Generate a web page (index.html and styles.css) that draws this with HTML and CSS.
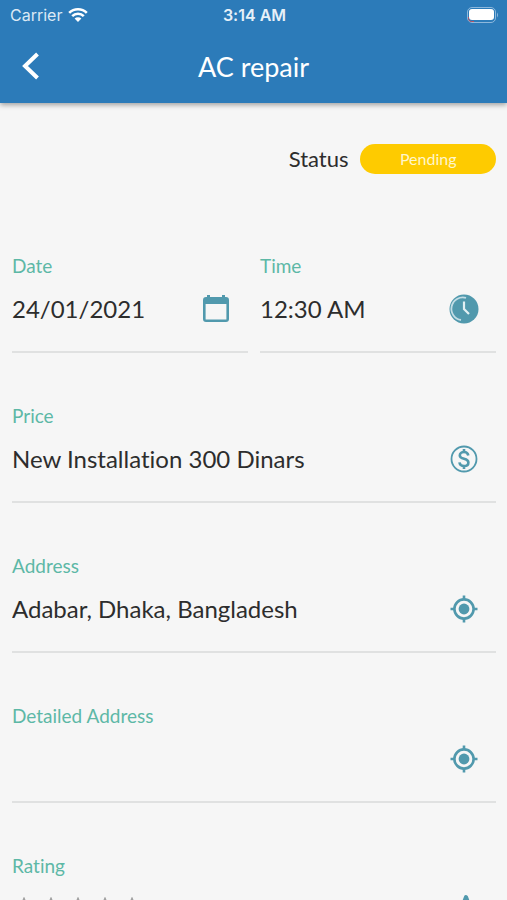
FILE: index.html
```html
<!DOCTYPE html>
<html lang="en">
	<head>
		<meta charset="UTF-8" />
		<meta name="viewport" content="width=device-width, initial-scale=1.0" />
		<title>AC repair</title>
		<link rel="stylesheet" href="styles.css">
	</head>
	<body>

		<header>
			<div class="status-bar">
				<div class="carrier">
					<span>Carrier</span>
					<svg width="20" height="16" viewBox="0 0 20 16" aria-hidden="true">
						<path d="M1.2 5.9a12.4 12.4 0 0 1 17.6 0M4.2 9.1a8.2 8.2 0 0 1 11.6 0" fill="none" stroke="#fff" stroke-width="2.6" />
						<path d="M6.6 11.6a4.8 4.8 0 0 1 6.8 0L10 15z" fill="#fff" />
					</svg>
				</div>
				<time class="clock">3:14 AM</time>
				<div class="battery">
					<svg width="32" height="16" viewBox="0 0 32 16" aria-hidden="true">
						<rect x="0.5" y="0.5" width="28" height="15" rx="4.5" fill="none" stroke="#8db8dc" />
						<path d="M1.5 10v1.5a3 3 0 0 0 3 3H7" fill="none" stroke="#b8505f" />
						<rect x="2" y="2" width="25" height="11" rx="3" fill="#fff" />
						<path d="M30 5.5q2 2.5 0 5z" fill="#8db8dc" />
					</svg>
				</div>
			</div>
			<div class="nav-bar">
				<button class="back" type="button" aria-label="Back">
					<svg width="18" height="28" viewBox="0 0 18 28" aria-hidden="true">
						<path d="M15.5 2 3 14l12.5 12" fill="none" stroke="#fff" stroke-width="4" />
					</svg>
				</button>
				<h1>AC repair</h1>
			</div>
		</header>

		<main>
			<div class="status-row">
				<span>Status</span>
				<span class="badge">Pending</span>
			</div>

			<form>
				<div class="row">
					<div class="field">
						<label for="date">Date</label>
						<div class="control">
							<input id="date" type="text" value="24/01/2021">
							<svg class="icon" viewBox="0 0 30 30" aria-hidden="true">
								<path d="M7.5 1v4M22.5 1v4" stroke="#5199ad" stroke-width="3" />
								<path d="M5 3h20a3 3 0 0 1 3 3v19a3 3 0 0 1-3 3H5a3 3 0 0 1-3-3V6a3 3 0 0 1 3-3zM4.600 10v15.500h20.800V10z" fill="#5199ad" fill-rule="evenodd" />
							</svg>
						</div>
					</div>
					<div class="field">
						<label for="time">Time</label>
						<div class="control">
							<input id="time" type="text" value="12:30 AM">
							<svg class="icon" viewBox="0 0 30 30" aria-hidden="true">
								<circle cx="15" cy="15" r="14.500" fill="#5199ad" />
								<path d="M17 3.800A11.400 11.400 0 1 0 12 26" fill="none" stroke="#c3dde5" stroke-width="1.800" />
								<path d="M15 7.500V15l5 5" fill="none" stroke="#e2f0f3" stroke-width="2.200" />
							</svg>
						</div>
					</div>
				</div>

				<div class="field">
					<label for="price">Price</label>
					<div class="control">
						<input id="price" type="text" value="New Installation 300 Dinars">
						<svg class="icon" viewBox="0 0 30 30" aria-hidden="true">
							<circle cx="15" cy="15" r="12.500" fill="none" stroke="#5199ad" stroke-width="1.800" />
							<path d="M15 5v3M15 22v3M19.300 11.500c-.4-2.300-1.900-3.500-4.300-3.500s-4.200 1.300-4.200 3.400c0 4.600 8.600 2.200 8.600 7 0 2.300-1.800 3.600-4.400 3.600s-4.200-1.300-4.600-3.600" fill="none" stroke="#5199ad" stroke-width="2.600" />
						</svg>
					</div>
				</div>

				<div class="field">
					<label for="address">Address</label>
					<div class="control">
						<input id="address" type="text" value="Adabar, Dhaka, Bangladesh">
						<svg class="icon" viewBox="0 0 30 30" aria-hidden="true">
							<circle cx="15" cy="15" r="9.600" fill="none" stroke="#5199ad" stroke-width="2.600" />
							<circle cx="15" cy="15" r="5.400" fill="#5199ad" />
							<path d="M15 1.500v4M15 24.500v4M1.500 15h4M24.500 15h4" stroke="#5199ad" stroke-width="2.600" />
						</svg>
					</div>
				</div>

				<div class="field">
					<label for="detailed">Detailed Address</label>
					<div class="control">
						<input id="detailed" type="text" value="">
						<svg class="icon" viewBox="0 0 30 30" aria-hidden="true">
							<circle cx="15" cy="15" r="9.600" fill="none" stroke="#5199ad" stroke-width="2.600" />
							<circle cx="15" cy="15" r="5.400" fill="#5199ad" />
							<path d="M15 1.500v4M15 24.500v4M1.500 15h4M24.500 15h4" stroke="#5199ad" stroke-width="2.600" />
						</svg>
					</div>
				</div>

				<div class="field">
					<span class="label" id="ratingLabel">Rating</span>
					<div class="control">
						<div class="stars" role="group" aria-labelledby="ratingLabel">
							<button type="button" aria-label="1 star"><svg viewBox="0 0 24 24"><path d="M12 2l3 7 7.500.6-5.700 5 1.700 7.400-6.500-4-6.500 4 1.700-7.400-5.700-5L9 9z" /></svg></button>
							<button type="button" aria-label="2 stars"><svg viewBox="0 0 24 24"><path d="M12 2l3 7 7.500.6-5.700 5 1.700 7.400-6.500-4-6.500 4 1.700-7.400-5.700-5L9 9z" /></svg></button>
							<button type="button" aria-label="3 stars"><svg viewBox="0 0 24 24"><path d="M12 2l3 7 7.500.6-5.700 5 1.700 7.400-6.500-4-6.500 4 1.700-7.400-5.700-5L9 9z" /></svg></button>
							<button type="button" aria-label="4 stars"><svg viewBox="0 0 24 24"><path d="M12 2l3 7 7.500.6-5.700 5 1.700 7.400-6.500-4-6.500 4 1.700-7.400-5.700-5L9 9z" /></svg></button>
							<button type="button" aria-label="5 stars"><svg viewBox="0 0 24 24"><path d="M12 2l3 7 7.500.6-5.700 5 1.700 7.400-6.500-4-6.500 4 1.700-7.400-5.700-5L9 9z" /></svg></button>
						</div>
						<svg class="icon" viewBox="0 0 30 30" aria-hidden="true">
							<path d="M17 3l3 8 8 .8-6 5.400 1.800 8L17 21l-6.800 4.200 1.800-8-6-5.400 8-.8z" fill="#5199ad" stroke="#5199ad" stroke-width="4" stroke-linejoin="round" />
						</svg>
					</div>
				</div>
			</form>
		</main>

	</body>
</html>
```

FILE: styles.css
```css
* {
	box-sizing: border-box;
	margin: 0;
	padding: 0;
}

body {
	font-family: Lato, sans-serif;
	font-variant-ligatures: none;
	background: #f6f6f6;
	color: #2d2d2d;
	height: 100vh;
	display: flex;
	flex-direction: column;
	overflow: hidden;
}

header {
	background: #2c7bb9;
	color: #fff;
	box-shadow: 0 2px 5px rgba(0, 0, 0, 0.35);
	z-index: 1;
}

.status-bar {
	display: grid;
	grid-template-columns: 1fr auto 1fr;
	align-items: center;
	height: 30px;
	padding: 0 8px 0 10px;
	font-family: Inter, sans-serif;
	font-size: 16px;
}

.carrier {
	display: flex;
	align-items: center;
	gap: 6px;
	color: #dbe9f5;
}

.clock {
	font-weight: 600;
	color: #e6f0f8;
}

.battery {
	display: flex;
	justify-content: flex-end;
}

.nav-bar {
	display: grid;
	grid-template-columns: 48px 1fr 48px;
	align-items: center;
	height: 72px;
	margin-bottom: 1px;
}

.nav-bar h1 {
	font-size: 27px;
	font-weight: 400;
	text-align: center;
}

.back {
	display: flex;
	justify-content: flex-end;
	padding: 8px;
	background: none;
	border: none;
	cursor: pointer;
}

main {
	flex: 1;
	padding: 41px 11px 0 12px;
	overflow-y: auto;
	scrollbar-width: none;
}

.status-row {
	display: flex;
	justify-content: flex-end;
	align-items: center;
	gap: 12px;
	margin-bottom: 79px;
	font-size: 22px;
	line-height: 30px;
}

.badge {
	width: 28%;
	background: #fecb00;
	color: #fff6cc;
	border-radius: 15px;
	font-size: 16px;
	text-align: center;
}

.row {
	display: grid;
	grid-template-columns: repeat(2, minmax(0, 1fr));
	gap: 12px;
}

.field {
	height: 100px;
	margin-bottom: 50px;
	border-bottom: 2px solid #e0e1e1;
}

.field label,
.field .label {
	display: block;
	color: #5db8a6;
	font-size: 19px;
	line-height: 26px;
}

.control {
	display: flex;
	align-items: center;
	height: 60px;
	padding-right: 17px;
}

.control input {
	flex: 1;
	min-width: 0;
	background: none;
	border: none;
	outline: none;
	color: inherit;
	font-family: inherit;
	font-variant-ligatures: inherit;
	font-size: 24px;
	line-height: 32px;
}

.icon {
	width: 30px;
	height: 30px;
	flex-shrink: 0;
}

.stars {
	flex: 1;
	display: flex;
	gap: 3px;
}

.stars button {
	width: 24px;
	height: 24px;
	background: none;
	border: none;
	cursor: pointer;
}

.stars svg {
	display: block;
	fill: none;
	stroke: #a0a0a0;
	stroke-width: 2;
}
```
